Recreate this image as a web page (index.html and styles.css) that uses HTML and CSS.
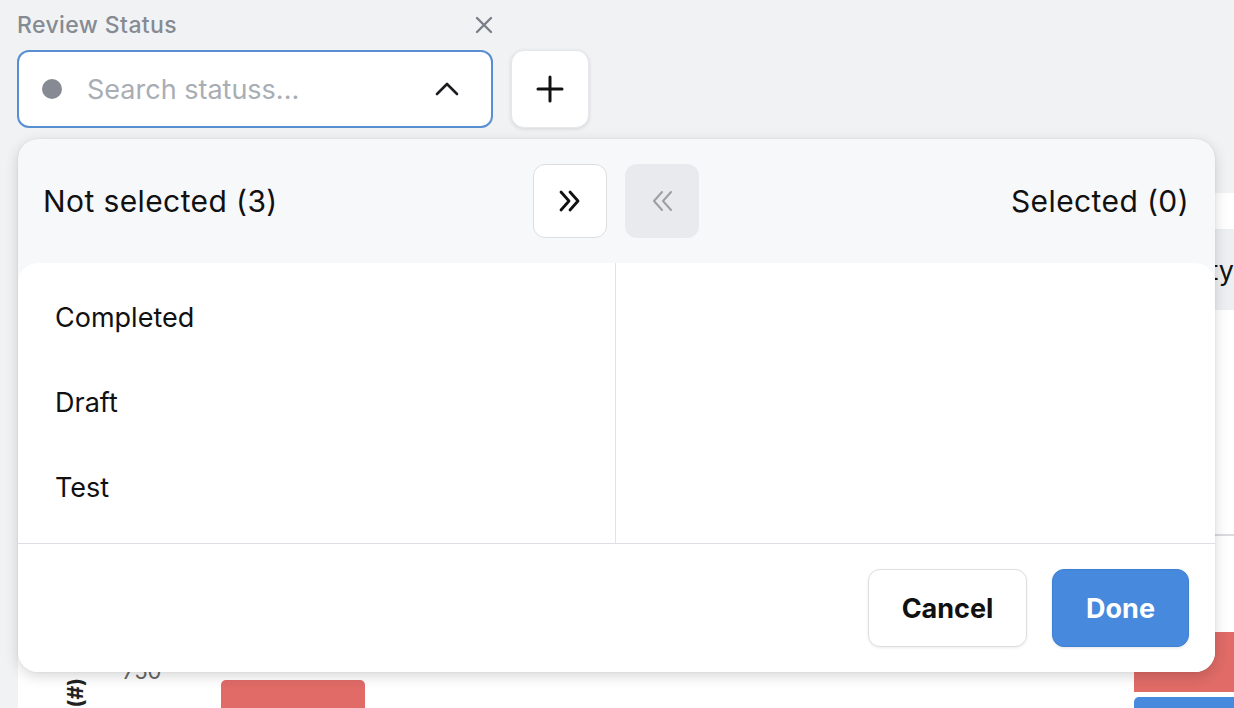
FILE: index.html
```html
<!DOCTYPE html>
<html lang="en">
<head>
<meta charset="utf-8">
<title>Review Status</title>
<link rel="stylesheet" href="styles.css">
</head>
<body>
<div class="page">
  <section class="field">
    <div class="field-head">
      <span class="field-label">Review Status</span>
      <button class="clear-btn" aria-label="Clear">
        <svg width="18" height="18" viewBox="0 0 18 18"><path d="M2 2L16 16M16 2L2 16" stroke="#7a7f87" stroke-width="2.4" stroke-linecap="round"/></svg>
      </button>
    </div>
    <div class="field-row">
      <div class="select-box">
        <span class="dot"></span>
        <span class="placeholder">Search statuss...</span>
        <svg class="chev" width="24" height="14" viewBox="0 0 24 14"><path d="M2 12L12 2L22 12" fill="none" stroke="#1b1d20" stroke-width="2.6" stroke-linecap="round" stroke-linejoin="round"/></svg>
      </div>
      <button class="add-btn" aria-label="Add">
        <svg width="28" height="28" viewBox="0 0 28 28"><path d="M14 2V26M2 14H26" stroke="#111" stroke-width="3" stroke-linecap="round"/></svg>
      </button>
    </div>
  </section>

  <section class="dash-card">
    <div class="dash-top"></div>
    <div class="dash-band"><span class="band-text">Quantity</span></div>
    <div class="chart">
      <div class="gridline" style="top:224px"></div>
      <span class="y-title">Count (#)</span>
      <span class="tick" style="top:348px">750</span>
      <div class="bar red" style="left:203px;top:370px;width:144px;height:60px"></div>
      <div class="bar red" style="left:1116px;top:322px;width:140px;height:60px"></div>
      <div class="bar blue" style="left:1116px;top:387px;width:140px;height:40px"></div>
    </div>
  </section>

  <div class="popup">
    <div class="popup-head">
      <span class="col-title">Not selected (3)</span>
      <div class="move-btns">
        <button class="move-btn active" aria-label="Move all right">
          <svg width="26" height="24" viewBox="0 0 26 24"><path d="M4 3L12 12L4 21M13 3L21 12L13 21" fill="none" stroke="#111" stroke-width="2.8" stroke-linecap="round" stroke-linejoin="round"/></svg>
        </button>
        <button class="move-btn disabled" aria-label="Move all left">
          <svg width="26" height="24" viewBox="0 0 26 24"><path d="M13 3L5 12L13 21M22 3L14 12L22 21" fill="none" stroke="#9a9ea5" stroke-width="2" stroke-linecap="round" stroke-linejoin="round"/></svg>
        </button>
      </div>
      <span class="col-title right">Selected (0)</span>
    </div>
    <div class="lists">
      <ul class="list">
        <li>Completed</li>
        <li>Draft</li>
        <li>Test</li>
      </ul>
      <ul class="list"></ul>
    </div>
    <div class="popup-foot">
      <button class="btn cancel">Cancel</button>
      <button class="btn done">Done</button>
    </div>
  </div>
</div>
</body>
</html>
```

FILE: styles.css
```css
* { box-sizing: border-box; }
html, body {
  margin: 0;
  padding: 0;
}
body {
  background: #f1f2f4;
  font-family: Inter, "Liberation Sans", Arial, sans-serif;
  color: #111;
  width: 1234px;
  height: 708px;
  overflow: hidden;
}
.page {
  position: relative;
  width: 1234px;
  height: 708px;
  overflow: hidden;
}
button {
  font-family: inherit;
  cursor: pointer;
}

/* field */
.field {
  padding: 10px 0 0 17px;
  width: 493px;
}
.field-head {
  display: flex;
  justify-content: space-between;
  align-items: center;
  height: 30px;
}
.field-label {
  font-size: 23px;
  font-weight: 500;
  color: #868b93;
  letter-spacing: 0.4px;
}
.clear-btn {
  border: 0;
  background: none;
  padding: 0;
  width: 18px;
  height: 18px;
  display: flex;
}
.field-row {
  display: flex;
  gap: 18px;
  margin-top: 10px;
}
.select-box {
  flex: 0 0 476px;
  height: 78px;
  border: 2px solid #5a8ed2;
  border-radius: 12px;
  background: #fff;
  display: flex;
  align-items: center;
  padding: 0 32px 0 23px;
}
.dot {
  width: 20px;
  height: 20px;
  border-radius: 50%;
  background: #868b93;
  flex: none;
}
.placeholder {
  margin-left: 25px;
  font-size: 27px;
  color: #a9adb4;
  flex: 1;
}
.chev { flex: none; }
.add-btn {
  width: 78px;
  height: 78px;
  flex: none;
  border: 1px solid #e6e8eb;
  border-radius: 13px;
  background: #fff;
  box-shadow: 0 1px 4px rgba(0,0,0,0.12);
  display: flex;
  align-items: center;
  justify-content: center;
  padding: 0;
}

/* background dashboard */
.dash-card {
  margin: 65px 0 0 18px;
  width: 1240px;
  background: #fff;
  height: 520px;
}
.dash-top {
  height: 37px;
  border-bottom: 1px solid #eceef1;
}
.dash-band {
  height: 80px;
  background: #eeeff2;
  display: flex;
  align-items: center;
  justify-content: flex-end;
  padding-right: 24px;
}
.band-text {
  font-size: 27px;
  color: #111;
}
.chart {
  position: relative;
  height: 403px;
}
.gridline {
  position: absolute;
  left: 0;
  right: 0;
  height: 2px;
  background: #d9dbde;
}
.y-title {
  position: absolute;
  left: 45px;
  top: 368px;
  font-size: 21px;
  font-weight: 700;
  color: #222;
  writing-mode: vertical-rl;
  transform: rotate(180deg);
  white-space: nowrap;
}
.tick {
  position: absolute;
  left: 104px;
  font-size: 22px;
  color: #666;
}
.bar {
  position: absolute;
  border-radius: 5px 5px 0 0;
}
.bar.red { background: #e06b67; }
.bar.blue { background: #4689dd; }

/* popup */
.popup {
  position: absolute;
  left: 18px;
  top: 139px;
  width: 1197px;
  height: 533px;
  background: #f7f8fa;
  border-radius: 20px;
  box-shadow: 0 4px 14px rgba(0,0,0,0.16), 0 0 2px rgba(0,0,0,0.08);
  display: flex;
  flex-direction: column;
  overflow: hidden;
}
.popup-head {
  height: 124px;
  flex: none;
  display: grid;
  grid-template-columns: 1fr auto 1fr;
  align-items: center;
  padding: 0 26px 0 25px;
}
.col-title {
  font-size: 30px;
  letter-spacing: 0.4px;
  color: #111;
}
.col-title.right { text-align: right; }
.move-btns {
  display: flex;
  gap: 18px;
}
.move-btn {
  width: 74px;
  height: 74px;
  border-radius: 12px;
  display: flex;
  align-items: center;
  justify-content: center;
  padding: 0;
}
.move-btn.active {
  background: #fff;
  border: 1px solid #dcdee2;
}
.move-btn.disabled {
  background: #e9eaed;
  border: 0;
  cursor: default;
}
.lists {
  height: 281px;
  flex: none;
  background: #fff;
  border-radius: 20px 20px 0 0;
  border-bottom: 1px solid #dcdfe3;
  display: grid;
  grid-template-columns: 598px 1fr;
}
.list {
  list-style: none;
  margin: 0;
  padding: 12px 0 0 37px;
}
.list:first-child { border-right: 1px solid #e1e3e6; }
.list li {
  height: 85px;
  display: flex;
  align-items: center;
  font-size: 27px;
  color: #111;
}
.popup-foot {
  flex: 1;
  background: #fff;
  display: flex;
  justify-content: flex-end;
  align-items: center;
  gap: 25px;
  padding-right: 26px;
}
.btn {
  height: 78px;
  border-radius: 12px;
  font-size: 27px;
  font-weight: 700;
}
.btn.cancel {
  width: 159px;
  background: #fff;
  border: 1px solid #dcdee2;
  color: #111;
  box-shadow: 0 1px 3px rgba(0,0,0,0.08);
}
.btn.done {
  width: 137px;
  background: #4689dd;
  border: 1px solid #3f7fd1;
  color: #fff;
  box-shadow: 0 1px 3px rgba(0,0,0,0.1);
}
```
